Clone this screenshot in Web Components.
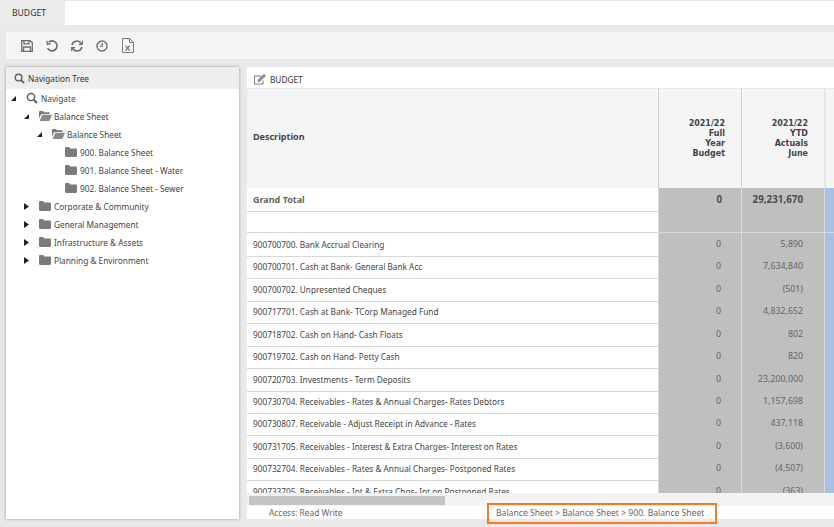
<!DOCTYPE html>
<html>
<head>
<meta charset="utf-8">
<title>Budget</title>
<style>
  html, body { margin: 0; height: 527px; overflow: hidden; }
  body {
    background: #e9e9e9;
    font-family: "Noto Sans", "DejaVu Sans", sans-serif;
    font-size: 8.25px;
    color: #444;
  }
</style>
</head>
<body>

<budget-app>
  <tab-strip slot="tabs" label="BUDGET"></tab-strip>
  <tool-bar slot="tools"></tool-bar>

  <nav-tree slot="nav">
    <tree-node icon="search" label="Navigate" state="open">
      <tree-node icon="open" label="Balance Sheet" state="open">
        <tree-node icon="open" label="Balance Sheet" state="open">
          <tree-node icon="folder" label="900. Balance Sheet"></tree-node>
          <tree-node icon="folder" label="901. Balance Sheet - Water"></tree-node>
          <tree-node icon="folder" label="902. Balance Sheet - Sewer"></tree-node>
        </tree-node>
      </tree-node>
      <tree-node icon="folder" label="Corporate &amp; Community" state="closed"></tree-node>
      <tree-node icon="folder" label="General Management" state="closed"></tree-node>
      <tree-node icon="folder" label="Infrastructure &amp; Assets" state="closed"></tree-node>
      <tree-node icon="folder" label="Planning &amp; Environment" state="closed"></tree-node>
    </tree-node>
  </nav-tree>

  <budget-grid slot="main" title="BUDGET">
    <grid-row kind="total" label="Grand Total" a="0" b="29,231,670"></grid-row>
    <grid-row label="" a="" b=""></grid-row>
    <grid-row label="900700700. Bank Accrual Clearing" a="0" b="5,890"></grid-row>
    <grid-row label="900700701. Cash at Bank- General Bank Acc" a="0" b="7,634,840"></grid-row>
    <grid-row label="900700702. Unpresented Cheques" a="0" b="(501)"></grid-row>
    <grid-row label="900717701. Cash at Bank- TCorp Managed Fund" a="0" b="4,832,652"></grid-row>
    <grid-row label="900718702. Cash on Hand- Cash Floats" a="0" b="802"></grid-row>
    <grid-row label="900719702. Cash on Hand- Petty Cash" a="0" b="820"></grid-row>
    <grid-row label="900720703. Investments - Term Deposits" a="0" b="23,200,000"></grid-row>
    <grid-row label="900730704. Receivables - Rates &amp; Annual Charges- Rates Debtors" a="0" b="1,157,698"></grid-row>
    <grid-row label="900730807. Receivable - Adjust Receipt in Advance - Rates" a="0" b="437,118"></grid-row>
    <grid-row label="900731705. Receivables - Interest &amp; Extra Charges- Interest on Rates" a="0" b="(3,600)"></grid-row>
    <grid-row label="900732704. Receivables - Rates &amp; Annual Charges- Postponed Rates" a="0" b="(4,507)"></grid-row>
    <grid-row label="900733705. Receivables - Int &amp; Extra Chgs- Int on Postponed Rates" a="0" b="(363)"></grid-row>
  </budget-grid>
</budget-app>

<script>
const ICONS = {
  search: `<svg width="12" height="12" viewBox="0 0 12 12" fill="none" stroke="#5f5f5f" stroke-width="1.5"><circle cx="5" cy="5" r="3.6"/><path d="M7.7 7.7L11 11" stroke-width="2"/></svg>`,
  folder: `<svg width="12" height="10" viewBox="0 0 12 10"><path d="M0 1.2C0 .5.5 0 1.2 0h2.6c.5 0 .8.3 1 .8l.2.6h5.8c.7 0 1.2.5 1.2 1.2v6.2c0 .7-.5 1.2-1.2 1.2H1.2C.5 10 0 9.5 0 8.8z" fill="#7a7a7a"/></svg>`,
  open: `<svg width="13" height="10" viewBox="0 0 13 10"><path d="M0 1.2C0 .5.5 0 1.2 0h2.4c.5 0 .8.3 1 .8l.2.5h4.9c.6 0 1 .4 1 1V3H3.2C2.5 3 2 3.4 1.7 4L0 7.6z" fill="#7a7a7a"/><path d="M3.3 3.8H13l-2.2 5.4c-.2.5-.6.8-1.1.8H.6z" fill="#8a8a8a"/></svg>`
};

class BudgetApp extends HTMLElement {
  connectedCallback() {
    this.attachShadow({ mode: "open" });
    this.shadowRoot.innerHTML = `
    <style>
      :host { display: flex; flex-direction: column; height: 527px; }
      .work { display: flex; gap: 8px; height: 452px; padding: 8px 0 0 6px; }
      ::slotted([slot="nav"]) { width: 233px; flex: none; }
      ::slotted([slot="main"]) { flex: 1; min-width: 0; }
    </style>
    <slot name="tabs"></slot>
    <slot name="tools"></slot>
    <div class="work">
      <slot name="nav"></slot>
      <slot name="main"></slot>
    </div>`;
  }
}

class TabStrip extends HTMLElement {
  connectedCallback() {
    this.attachShadow({ mode: "open" });
    this.shadowRoot.innerHTML = `
    <style>
      :host { display: flex; height: 25px; padding-top: 1px; box-sizing: border-box; }
      .tab { width: 65px; padding-left: 12px; box-sizing: border-box; line-height: 24px; font-size: 8.6px; color: #333; background: #ececec; }
      .rest { flex: 1; background: #fff; }
    </style>
    <div class="tab">${this.getAttribute("label")}</div>
    <div class="rest"></div>`;
  }
}

class ToolBar extends HTMLElement {
  connectedCallback() {
    this.attachShadow({ mode: "open" });
    this.shadowRoot.innerHTML = `
    <style>
      :host { display: flex; align-items: center; gap: 13px; height: 27px; margin: 7px 0 0 6px; padding-left: 15px; background: #f5f5f5; }
      svg { display: block; fill: none; stroke: #6c6c6c; stroke-width: 1.3; }
    </style>
    <svg width="12" height="12" viewBox="0 0 12 12"><path d="M.7.7h8.6l2 2v8.6H.7z"/><path d="M3 .7v3.2h5V.7M2.6 11.3V7h6.8v4.3"/></svg>
    <svg width="12" height="12" viewBox="0 0 12 12"><path d="M2.6 2.2A5 5 0 1 1 1.6 8.2" stroke-width="1.6"/><path d="M.8 .8l.6 3.6 3.4-.8"/></svg>
    <svg width="12" height="12" viewBox="0 0 12 12"><path d="M1 5a5 5 0 0 1 8.6-2.4L11 4" stroke-width="1.6"/><path d="M11 7a5 5 0 0 1-8.6 2.4L1 8" stroke-width="1.6"/><path d="M11.3.8v3.6H7.8M.7 11.2V7.6h3.5" stroke-width="1.1"/></svg>
    <svg width="12" height="12" viewBox="0 0 12 12"><circle cx="6" cy="6" r="5" stroke-width="1.4"/><path d="M6.3 3v3.3H3.8" stroke-width="1.1"/></svg>
    <svg width="12" height="15" viewBox="0 0 12 15" style="stroke-width:.9;margin-left:1px"><path d="M.5.5h7.2l3.8 3.8v10.2H.5z"/><path d="M7.5.5v4h4"/><path d="M3.6 7.6l4 5M7.6 7.6l-4 5" stroke-width="1.2"/></svg>`;
  }
}

class NavTree extends HTMLElement {
  connectedCallback() {
    this.attachShadow({ mode: "open" });
    this.shadowRoot.innerHTML = `
    <style>
      :host { display: block; background: #fff; box-shadow: 0 0 3px rgba(0,0,0,.35); }
      .head { display: flex; align-items: center; gap: 3px; height: 22px; padding: 1px 0 0 8px; box-sizing: border-box; background: #eee; color: #333; }
      svg { display: block; }
    </style>
    <div class="head">${ICONS.search.replace('width="12" height="12"', 'width="11" height="11"')}<span>Navigation Tree</span></div>
    <div><slot></slot></div>`;
  }
}

class TreeNode extends HTMLElement {
  connectedCallback() {
    const state = this.getAttribute("state");
    const arrow = state === "open"
      ? `<svg width="5" height="5" viewBox="0 0 5 5"><path d="M5 0v5H0z" fill="#222"/></svg>`
      : state === "closed"
        ? `<svg width="5" height="7" viewBox="0 0 5 7"><path d="M0 0l5 3.5L0 7z" fill="#222"/></svg>`
        : "";
    this.attachShadow({ mode: "open" });
    this.shadowRoot.innerHTML = `
    <style>
      :host { display: block; }
      .row { display: flex; align-items: center; height: 18px; white-space: nowrap; }
      .arrow { width: 15px; margin-right: 5px; flex: none; display: flex; justify-content: center; }
      .icon { width: 15px; flex: none; display: flex; }
      .kids { padding-left: 13px; }
      svg { display: block; }
    </style>
    <div class="row"><span class="arrow">${arrow}</span><span class="icon">${ICONS[this.getAttribute("icon")]}</span><span>${this.getAttribute("label").replace(/&/g, "&amp;")}</span></div>
    <div class="kids"><slot></slot></div>`;
  }
}

class BudgetGrid extends HTMLElement {
  connectedCallback() {
    this.attachShadow({ mode: "open" });
    this.shadowRoot.innerHTML = `
    <style>
      :host { display: flex; flex-direction: column; position: relative; background: #fff; }
      .title { display: flex; align-items: center; gap: 4px; height: 22px; padding: 3px 0 0 7px; box-sizing: border-box; color: #333; border-bottom: 1px solid #e8e8e8; }
      .title svg { display: block; fill: none; stroke: #777; stroke-width: 1; }
      .head { display: grid; grid-template-columns: 411px 83px 83px 1fr; height: 99px; background: #f5f5f5; font-weight: 700; color: #3f4650; }
      .head div { display: flex; align-items: center; }
      .desc { padding: 0 0 5px 6px; font-size: 9px; }
      .col { border-left: 1px solid #cfcfcf; box-sizing: border-box; justify-content: flex-end; text-align: right; padding: 1px 16px 0 0; font: 700 8px/10px "DejaVu Sans", sans-serif; }
      .last { border-left: 2px solid #e6e6e6; }
      .rows { height: 305px; overflow: hidden; }
      .scroll { height: 13px; background: #f3f3f3; padding: 3px 0 0 2px; box-sizing: border-box; }
      .thumb { width: 196px; height: 9px; background: #c4c4c4; }
      .status { display: grid; grid-template-columns: 240px 1fr; height: 13px; font-size: 8.4px; line-height: 14px; color: #666; }
      .status span:first-child { padding-left: 22px; }
      .crumb { position: absolute; left: 240px; top: 436px; width: 230px; height: 21px; box-sizing: border-box; border: 2px solid #f57c20; padding-left: 7px; font-size: 8.6px; line-height: 17px; color: #666; white-space: nowrap; }
    </style>
    <div class="title">
      <svg width="12" height="11" viewBox="0 0 12 11"><path d="M9 6.5v3.5H.5V2h6.5"/><path d="M4 7.5l.5-2L10 .5l1.5 1.3L6 7z" fill="#999"/></svg>
      <span>${this.getAttribute("title")}</span>
    </div>
    <div class="head">
      <div class="desc">Description</div>
      <div class="col">2021/22<br>Full<br>Year<br>Budget</div>
      <div class="col">2021/22<br>YTD<br>Actuals<br>June</div>
      <div class="col last"></div>
    </div>
    <div class="rows"><slot></slot></div>
    <div class="scroll"><div class="thumb"></div></div>
    <div class="status"><span>Access: Read Write</span><span></span></div>
    <div class="crumb">Balance Sheet &gt; Balance Sheet &gt; 900. Balance Sheet</div>`;
  }
}

class GridRow extends HTMLElement {
  connectedCallback() {
    this.attachShadow({ mode: "open" });
    const esc = (s) => (s || "").replace(/&/g, "&amp;");
    this.shadowRoot.innerHTML = `
    <style>
      :host { display: grid; grid-template-columns: 411px 83px 83px 1fr; height: 22.45px; box-sizing: border-box; line-height: 23px; white-space: nowrap; }
      :host([kind="total"]) { font-weight: 700; color: #666; font-size: 9px; line-height: 23px; }
      div { border-bottom: 1px solid #d9d9d9; box-sizing: border-box; }
      .label { padding-left: 6px; overflow: hidden; }
      .a, .b { background: #bfbfbf; text-align: right; border-left: 1px solid #d9d9d9; color: #666; font-size: 8.8px; }
      :host([kind="total"]) .a, :host([kind="total"]) .b { color: #4d4d4d; font-size: 9.8px; }
      .a { padding-right: 20px; }
      :host([kind="total"]) .a { padding-right: 19px; }
      .b { padding-right: 21px; }
      .c { background: #a9bfe4; border-left: 1px solid #d9d9d9; }
    </style>
    <div class="label">${esc(this.getAttribute("label"))}</div>
    <div class="a">${this.getAttribute("a")}</div>
    <div class="b">${this.getAttribute("b")}</div>
    <div class="c"></div>`;
  }
}

customElements.define("budget-app", BudgetApp);
customElements.define("tab-strip", TabStrip);
customElements.define("tool-bar", ToolBar);
customElements.define("nav-tree", NavTree);
customElements.define("tree-node", TreeNode);
customElements.define("budget-grid", BudgetGrid);
customElements.define("grid-row", GridRow);
</script>
</body>
</html>
